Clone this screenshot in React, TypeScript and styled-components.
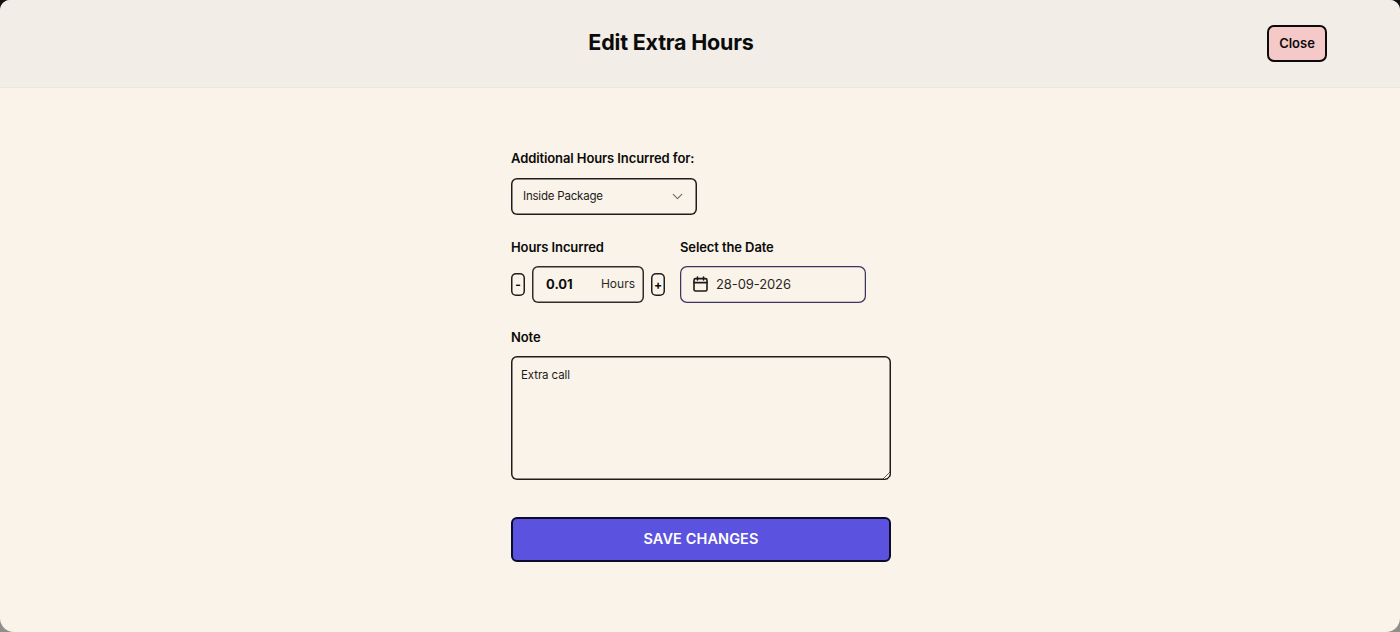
import React from "react"
import styled, { createGlobalStyle } from "styled-components"
import { ChevronDown } from "lucide-react"

const GlobalStyle = createGlobalStyle`
    html, body {
        margin: 0;
        padding: 0;
        height: 100%;
        background: linear-gradient(#111110, #8f8f8c);
    }
    body {
        font-family: Inter, "Liberation Sans", sans-serif;
        color: #0b0b0b;
    }
`

const Modal = styled.div`
    width: 1400px;
    height: 632px;
    background: #faf3e9;
    border-radius: 10px 10px 14px 14px;
    overflow: hidden;
    display: flex;
    flex-direction: column;
`

const Header = styled.header`
    height: 88px;
    flex: none;
    box-sizing: border-box;
    background: #f2eee7;
    border-bottom: 1px solid #ebe6df;
    display: flex;
    align-items: center;
    padding: 0 73px 0 0;
`

const Title = styled.h1`
    margin: 0;
    flex: 1;
    padding: 0 0 4px 75px;
    text-align: center;
    font-size: 21.5px;
    font-weight: 700;
    letter-spacing: -0.2px;
`

const CloseButton = styled.button`
    flex: none;
    width: 60px;
    height: 37px;
    box-sizing: border-box;
    background: #f6c9c9;
    border: 2px solid #0b0b0b;
    border-radius: 7px;
    font: 600 13px Inter, "Liberation Sans", sans-serif;
    color: #0b0b0b;
    padding: 0 0 2px;
`

const Form = styled.form`
    width: 380px;
    margin: 62px 0 0 511px;
    display: flex;
    flex-direction: column;
`

const Label = styled.label`
    display: block;
    height: 17px;
    line-height: 17px;
    font-size: 13px;
    font-weight: 600;
    letter-spacing: -0.1px;
    margin-bottom: 10px;
`

const SelectBox = styled.div`
    width: 186px;
    height: 37px;
    box-sizing: border-box;
    box-shadow: inset 0 0 0 1.5px #1f1d1b;
    border-radius: 6px;
    display: flex;
    align-items: center;
    justify-content: space-between;
    padding: 0 11px 1px 12px;
    font-size: 11.5px;
    letter-spacing: -0.2px;
    margin: 1px 0 24px;
    color: #1c1b1a;
`

const Row = styled.div`
    display: flex;
    gap: 15px;
    margin-bottom: 26px;
`

const Stepper = styled.div`
    display: flex;
    align-items: center;
    gap: 7px;
`

const StepButton = styled.button`
    width: 14px;
    height: 23px;
    box-sizing: border-box;
    padding: 0;
    background: transparent;
    border: none;
    box-shadow: inset 0 0 0 1.5px #1f1d1b;
    border-radius: 5px;
    font: 700 12px Inter, "Liberation Sans", sans-serif;
    color: #0b0b0b;
`

const HoursBox = styled.div`
    width: 112px;
    height: 37px;
    box-sizing: border-box;
    box-shadow: inset 0 0 0 1.5px #2f2d2a;
    border-radius: 6px;
    display: flex;
    align-items: center;
    justify-content: space-between;
    padding: 0 9px 2px 14px;
`

const HoursValue = styled.span`
    font-size: 13px;
    font-weight: 700;
`

const HoursUnit = styled.span`
    font-size: 12px;
    color: #2a2825;
`

const DateBox = styled.div`
    width: 186px;
    height: 37px;
    box-sizing: border-box;
    box-shadow: inset 0 0 0 1.25px #3b3560;
    border-radius: 7px;
    display: flex;
    align-items: center;
    gap: 8px;
    padding: 0 13px 1px;
    font-size: 13px;
    letter-spacing: -0.1px;
    color: #2a2825;
`

const NoteArea = styled.textarea`
    display: block;
    width: 380px;
    height: 124px;
    box-sizing: border-box;
    background: transparent;
    border: none;
    box-shadow: inset 0 0 0 1.5px #1f1d1b;
    border-radius: 6px;
    padding: 11px 10px;
    margin: 0 0 37px;
    font: 11.5px/17px Inter, "Liberation Sans", sans-serif;
    letter-spacing: -0.1px;
    color: #1c1b1a;
    outline: none;
`

const SaveButton = styled.button`
    width: 380px;
    height: 45px;
    box-sizing: border-box;
    background: #5c52e0;
    border: 2px solid #0b0b2a;
    border-radius: 6px;
    padding: 0 0 2px;
    color: #fff;
    font: 600 14.5px Inter, "Liberation Sans", sans-serif;
    letter-spacing: 0.1px;
`

const CalendarIcon = () => (
    <svg width="15" height="16" viewBox="0 0 15 16" fill="none" stroke="#1c1b1a" strokeWidth="1.6" strokeLinecap="round">
        <rect x="1" y="2.6" width="13" height="12.4" rx="1.6" />
        <path d="M1 6.6h13M4.5 1v3M10.5 1v3" />
    </svg>
)

export default function App() {
    return (
        <>
            <GlobalStyle />
            <Modal>
                <Header>
                    <Title>Edit Extra Hours</Title>
                    <CloseButton type="button">Close</CloseButton>
                </Header>
                <Form>
                    <Label>Additional Hours Incurred for:</Label>
                    <SelectBox>
                        Inside Package
                        <ChevronDown size={17} color="#6b6862" strokeWidth={1.5} />
                    </SelectBox>
                    <Row>
                        <div>
                            <Label>Hours Incurred</Label>
                            <Stepper>
                                <StepButton type="button">-</StepButton>
                                <HoursBox>
                                    <HoursValue>0.01</HoursValue>
                                    <HoursUnit>Hours</HoursUnit>
                                </HoursBox>
                                <StepButton type="button">+</StepButton>
                            </Stepper>
                        </div>
                        <div>
                            <Label>Select the Date</Label>
                            <DateBox>
                                <CalendarIcon />
                                28-09-2026
                            </DateBox>
                        </div>
                    </Row>
                    <Label>Note</Label>
                    <NoteArea defaultValue="Extra call" />
                    <SaveButton type="button">SAVE CHANGES</SaveButton>
                </Form>
            </Modal>
        </>
    )
}
